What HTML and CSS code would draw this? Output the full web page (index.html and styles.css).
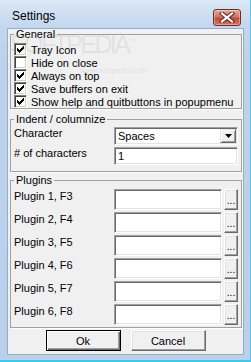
FILE: index.html
```html
<!DOCTYPE html>
<html lang="en">
<head>
  <meta charset="UTF-8" />
  <title>Settings</title>
  <link rel="stylesheet" href="styles.css">
</head>
<body>
  <div class="window">
    <div class="titlebar">
      <span class="title">Settings</span>
      <span class="close" title="Close">
        <svg width="16" height="11" viewBox="0 0 16 11">
          <path d="M3 1.5 L13 9.5 M13 1.5 L3 9.5" stroke="#5a2a26" stroke-width="4.2" stroke-linecap="square" fill="none"/>
          <path d="M3 1.5 L13 9.5 M13 1.5 L3 9.5" stroke="#fff" stroke-width="2.2" stroke-linecap="square" fill="none"/>
        </svg>
      </span>
    </div>

    <div class="client">
      <fieldset class="group general">
        <legend>General</legend>
        <label class="check"><span class="box on"></span>Tray Icon</label>
        <label class="check"><span class="box"></span>Hide on close</label>
        <label class="check"><span class="box on"></span>Always on top</label>
        <label class="check"><span class="box on"></span>Save buffers on exit</label>
        <label class="check"><span class="box on"></span>Show help and quitbuttons in popupmenu</label>
      </fieldset>

      <fieldset class="group indent">
        <legend>Indent / columnize</legend>
        <div class="field-row">
          <span class="lbl">Character</span>
          <div class="combo">
            <span class="value">Spaces</span>
            <span class="drop">
              <svg width="7" height="4" viewBox="0 0 7 4"><path d="M0 0 H7 L3.5 4 Z" fill="#000"/></svg>
            </span>
          </div>
        </div>
        <div class="field-row">
          <span class="lbl"># of characters</span>
          <div class="edit"><span class="value">1</span></div>
        </div>
      </fieldset>

      <fieldset class="group plugins">
        <legend>Plugins</legend>
        <div class="plug-row"><span class="lbl">Plugin 1, F3</span><div class="pfield"></div><span class="dots">...</span></div>
        <div class="plug-row"><span class="lbl">Plugin 2, F4</span><div class="pfield"></div><span class="dots">...</span></div>
        <div class="plug-row"><span class="lbl">Plugin 3, F5</span><div class="pfield"></div><span class="dots">...</span></div>
        <div class="plug-row"><span class="lbl">Plugin 4, F6</span><div class="pfield"></div><span class="dots">...</span></div>
        <div class="plug-row"><span class="lbl">Plugin 5, F7</span><div class="pfield"></div><span class="dots">...</span></div>
        <div class="plug-row"><span class="lbl">Plugin 6, F8</span><div class="pfield"></div><span class="dots">...</span></div>
      </fieldset>

      <div class="buttons">
        <button class="btn default">Ok</button>
        <button class="btn">Cancel</button>
      </div>
    </div>

    <div class="watermark">SOFTPEDIA<sup>™</sup></div>
    <div class="watermark-url">www.softpedia.com</div>
  </div>
</body>
</html>
```

FILE: styles.css
```css
* { box-sizing: border-box; }
body {
  margin: 0;
  font-family: "Liberation Sans", Arial, sans-serif;
  font-size: 11px;
  color: #000;
  background: #fff;
}
.window {
  position: relative;
  width: 251px;
  height: 362px;
  display: flex;
  flex-direction: column;
  padding: 0 6px 5px 7px;
  background: linear-gradient(to bottom, #dbe8f6 0, #c3d7ee 26px, #bad2eb 60px, #b9d1ea 100%);
  border-right: 1px solid #55c6ec;
  border-bottom: 2px solid #2ccff4;
  overflow: hidden;
}
.titlebar {
  height: 28px;
  flex: none;
  display: flex;
  align-items: flex-start;
  justify-content: space-between;
}
.title {
  margin: 9px 0 0 5px;
  font-size: 12px;
  line-height: 14px;
}
.close {
  width: 28px;
  height: 17px;
  margin: 9px 3px 0 0;
  display: flex;
  align-items: center;
  justify-content: center;
  border: 1px solid #6e2c26;
  border-radius: 3px;
  background: linear-gradient(to bottom, #e9a99c 0, #d7725f 45%, #c24a33 55%, #d2786a 100%);
  box-shadow: inset 0 0 0 1px rgba(255, 255, 255, 0.35);
}
.client {
  flex: 1;
  display: flex;
  flex-direction: column;
  background: #f0f0f0;
  border: 1px solid #97adc6;
}

/* group boxes */
.group {
  margin: 0 1px 0 2px;
  padding: 3px 3px 0;
  border: 1px solid #a0a0a0;
  box-shadow: 1px 1px 0 #fff;
  min-width: 0;
}
.group legend {
  padding: 0 2px;
  margin-left: 0;
  line-height: 11px;
}
.general { padding-bottom: 0; height: 80px; }
.indent { margin-top: 5px; padding-top: 2px; padding-bottom: 6px; }
.plugins { margin-top: 3px; padding-top: 3px; padding-bottom: 2px; }

.check {
  display: flex;
  align-items: center;
  gap: 4px;
  height: 13px;
  white-space: nowrap;
}
.box {
  position: relative;
  width: 13px;
  height: 13px;
  flex: none;
  background: #fff;
  border: 1px solid;
  border-color: #808080 #fff #fff #808080;
  box-shadow: inset 1px 1px 0 #404040, inset -1px -1px 0 #d4d0c8;
}
.box.on::after {
  content: "";
  position: absolute;
  left: 2px;
  top: 2px;
  width: 7px;
  height: 7px;
  background: url("data:image/svg+xml;utf8,<svg xmlns='http://www.w3.org/2000/svg' width='7' height='7' viewBox='0 0 7 7'><path d='M0 2h1v1h1v1h1V3h1V2h1V1h1V0h1v3H6v1H5v1H4v1H3v1H2V6H1V5H0z' fill='black'/></svg>") no-repeat;
}

.field-row, .plug-row {
  display: flex;
  align-items: flex-start;
}
.field-row { height: 18px; }
.field-row + .field-row { margin-top: 2px; }
.plug-row { height: 21px; }
.plug-row + .plug-row { margin-top: 2px; }
.lbl {
  line-height: 13px;
  white-space: nowrap;
}
.plug-row .lbl { padding-top: 1px; }

.combo, .edit, .pfield {
  background: #fff;
  border: 1px solid;
  border-color: #a0a0a0 #fff #fff #a0a0a0;
  box-shadow: inset 1px 1px 0 #696969, inset -1px -1px 0 #e3e3e3;
}
.combo, .edit {
  width: 124px;
  height: 18px;
  margin-left: auto;
  display: flex;
  align-items: center;
  padding: 1px 1px 1px 3px;
}
.value {
  flex: 1;
  line-height: 13px;
}
.drop {
  width: 16px;
  height: 14px;
  display: flex;
  align-items: center;
  justify-content: center;
  background: #f0f0f0;
  border: 1px solid;
  border-color: #e3e3e3 #696969 #696969 #e3e3e3;
  box-shadow: inset 1px 1px 0 #fff, inset -1px -1px 0 #a0a0a0;
}
.pfield {
  width: 108px;
  height: 21px;
  margin-left: auto;
}
.dots {
  width: 14px;
  height: 21px;
  margin-left: 2px;
  display: flex;
  align-items: flex-end;
  justify-content: center;
  padding-bottom: 3px;
  font-size: 10px;
  line-height: 10px;
  background: #f0f0f0;
  border: 1px solid;
  border-color: #fff #696969 #696969 #fff;
  box-shadow: inset -1px -1px 0 #a0a0a0, inset 1px 1px 0 #e3e3e3;
}

.buttons {
  display: flex;
  justify-content: center;
  gap: 10px;
  margin-top: 2px;
}
.btn {
  width: 75px;
  height: 21px;
  padding: 0;
  font: inherit;
  color: #000;
  background: #f0f0f0;
  border: 1px solid;
  border-color: #fff #696969 #696969 #fff;
  box-shadow: inset -1px -1px 0 #a0a0a0, inset 1px 1px 0 #e3e3e3;
}
.btn.default {
  border: 1px solid #000;
  box-shadow: inset 1px 1px 0 #fff, inset -1px -1px 0 #696969, inset -2px -2px 0 #a0a0a0;
}

.watermark {
  position: absolute;
  left: 10px;
  top: 30px;
  font-size: 25px;
  letter-spacing: -2.6px;
  color: rgba(150, 150, 150, 0.16);
  pointer-events: none;
}
.watermark sup { font-size: 8px; letter-spacing: 0; }
.watermark-url {
  position: absolute;
  left: 80px;
  top: 66px;
  font-size: 8px;
  color: rgba(150, 150, 150, 0.2);
  pointer-events: none;
}
```
